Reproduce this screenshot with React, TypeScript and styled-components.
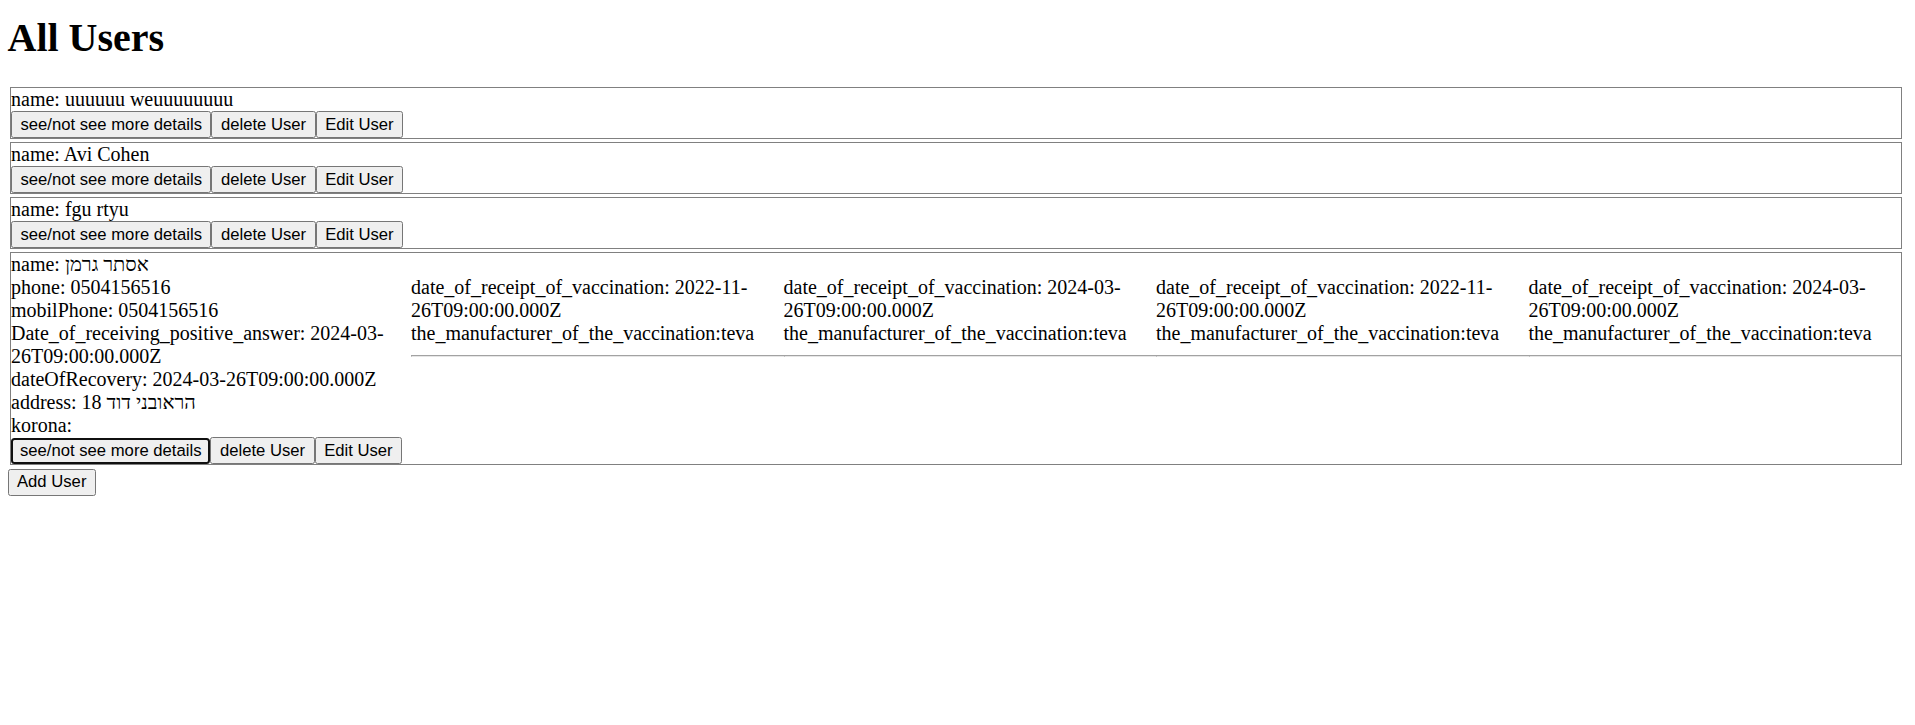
import React from "react";
import styled, { createGlobalStyle, css } from "styled-components";

const GlobalStyle = createGlobalStyle`
  html, body {
    margin: 0;
    padding: 0;
    background: #ffffff;
  }
  body {
    padding: 0 0 0 7.5px;
    font-family: "Liberation Serif", "DejaVu Serif", "Times New Roman", serif;
    font-size: 20px;
    color: #000000;
  }
`;

const Title = styled.h1`
  margin: 14.4px 0 26px;
  font-size: 40px;
  font-weight: bold;
  line-height: normal;
`;

const UserList = styled.div`
  display: flex;
  flex-direction: column;
  gap: 3px;
  margin: 0 13px 3.5px 2.5px;
`;

const UserCard = styled.div<{ $expanded?: boolean }>`
  border: 1px solid #808080;
  display: grid;
  grid-template-columns: ${(p) => (p.$expanded ? "400px 1fr" : "1fr")};
  align-items: start;
`;

const DetailsColumn = styled.div`
  display: flex;
  flex-direction: column;
  min-width: 0;
`;

const Field = styled.div`
  line-height: normal;
`;

const ButtonRow = styled.div`
  display: flex;
  align-items: center;
`;

const ActionButton = styled.button<{ $focused?: boolean }>`
  font-family: "Liberation Sans", Arial, sans-serif;
  font-size: 16.67px;
  line-height: normal;
  color: #000000;
  background: #efefef;
  border: 1px solid #767676;
  border-radius: 2.5px;
  padding: 2.5px 8.5px;
  margin: 0;
  cursor: default;
  white-space: nowrap;
  ${(p) =>
    p.$focused &&
    css`
      border: 2.5px solid #101010;
      border-radius: 3.5px;
      padding: 1px 7px;
    `}
`;

const VaccineList = styled.div`
  display: flex;
  align-items: flex-start;
  padding-top: 23px;
  min-width: 0;
`;

const VaccineItem = styled.div`
  flex: 1 1 0;
  min-width: 0;
`;

const Divider = styled.hr`
  margin: 10px 0;
  height: 0;
  border: none;
  border-top: 1px solid #a2a2a2;
  border-bottom: 1px solid #e6e6e6;
  border-left: 1px solid #a2a2a2;
`;

type Vaccine = { date: string; manufacturer: string };

type User = {
  name: string;
  expanded?: boolean;
  phone?: string;
  mobilPhone?: string;
  positive?: string;
  recovery?: string;
  address?: string;
  korona?: string;
  vaccines?: Vaccine[];
};

const users: User[] = [
  { name: "uuuuuu weuuuuuuuu" },
  { name: "Avi Cohen" },
  { name: "fgu rtyu" },
  {
    name: "אסתר גרמן",
    expanded: true,
    phone: "0504156516",
    mobilPhone: "0504156516",
    positive: "2024-03-26T09:00:00.000Z",
    recovery: "2024-03-26T09:00:00.000Z",
    address: "18 הראובני דוד",
    korona: "",
    vaccines: [
      { date: "2022-11-26T09:00:00.000Z", manufacturer: "teva" },
      { date: "2024-03-26T09:00:00.000Z", manufacturer: "teva" },
      { date: "2022-11-26T09:00:00.000Z", manufacturer: "teva" },
      { date: "2024-03-26T09:00:00.000Z", manufacturer: "teva" },
    ],
  },
];

const Buttons: React.FC<{ focused?: boolean }> = ({ focused }) => (
  <ButtonRow>
    <ActionButton $focused={focused}>see/not see more details</ActionButton>
    <ActionButton>delete User</ActionButton>
    <ActionButton>Edit User</ActionButton>
  </ButtonRow>
);

const UserRow: React.FC<{ user: User }> = ({ user }) => (
  <UserCard $expanded={user.expanded}>
    <DetailsColumn>
      <Field>name: {user.name}</Field>
      {user.expanded && (
        <>
          <Field>phone: {user.phone}</Field>
          <Field>mobilPhone: {user.mobilPhone}</Field>
          <Field>Date_of_receiving_positive_answer: {user.positive}</Field>
          <Field>dateOfRecovery: {user.recovery}</Field>
          <Field>address: {user.address}</Field>
          <Field>korona: {user.korona}</Field>
        </>
      )}
      <Buttons focused={user.expanded} />
    </DetailsColumn>
    {user.expanded && (
      <VaccineList>
        {user.vaccines?.map((v, i) => (
          <VaccineItem key={i}>
            <Field>date_of_receipt_of_vaccination: {v.date}</Field>
            <Field>the_manufacturer_of_the_vaccination:{v.manufacturer}</Field>
            <Divider />
          </VaccineItem>
        ))}
      </VaccineList>
    )}
  </UserCard>
);

export default function App() {
  return (
    <>
      <GlobalStyle />
      <Title>All Users</Title>
      <UserList>
        {users.map((u, i) => (
          <UserRow key={i} user={u} />
        ))}
      </UserList>
      <ActionButton>Add User</ActionButton>
    </>
  );
}
